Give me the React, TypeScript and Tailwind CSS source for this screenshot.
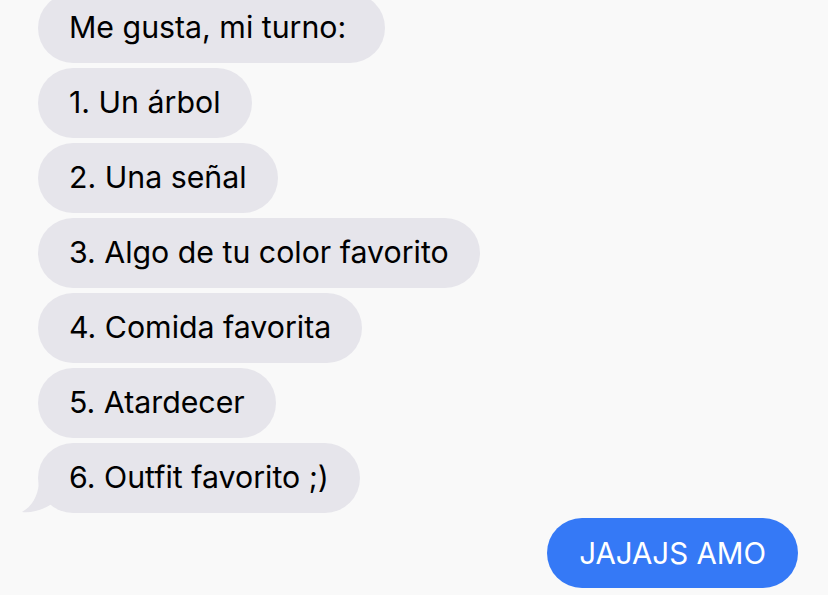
import React from "react";

const items = [
  "Me gusta, mi turno:",
  "1. Un árbol",
  "2. Una señal",
  "3. Algo de tu color favorito",
  "4. Comida favorita",
  "5. Atardecer",
];

function Gray({ text, tail, wide }: { text: string; tail?: boolean; wide?: boolean }) {
  return (
    <div className="relative self-start">
      {tail && (
        <svg
          className="absolute left-[-18px] bottom-0"
          width="40"
          height="34"
          viewBox="0 0 40 34"
        >
          <path
            d="M19 0 C19 14 14 26 2 33 C 12 34 22 31 30 26 L40 20 L40 0 Z"
            fill="#e6e5eb"
          />
        </svg>
      )}
      <div
        className={
          wide
            ? "relative h-[70px] rounded-full bg-[#e6e5eb] pl-[31px] pr-[39px] flex items-center text-[30.3px] text-black whitespace-nowrap"
            : "relative h-[70px] rounded-full bg-[#e6e5eb] px-[31px] flex items-center text-[30.3px] text-black whitespace-nowrap"
        }
      >
        {text}
      </div>
    </div>
  );
}

export default function App() {
  return (
    <div
      className="w-[828px] h-[595px] overflow-hidden bg-[#f9f9f9]"
      style={{ fontFamily: "Inter, 'Liberation Sans', sans-serif" }}
    >
      <div className="flex flex-col gap-[5px] pl-[38px] pr-[30px] mt-[-7px]">
        {items.map((t, i) => (
          <Gray key={t} text={t} wide={i === 0} />
        ))}
        <Gray text="6. Outfit favorito ;)" tail />
        <div className="self-end h-[70px] rounded-full bg-[#3579f6] px-[32px] flex items-center text-[29.5px] text-white whitespace-nowrap">
          JAJAJS AMO
        </div>
      </div>
    </div>
  );
}
